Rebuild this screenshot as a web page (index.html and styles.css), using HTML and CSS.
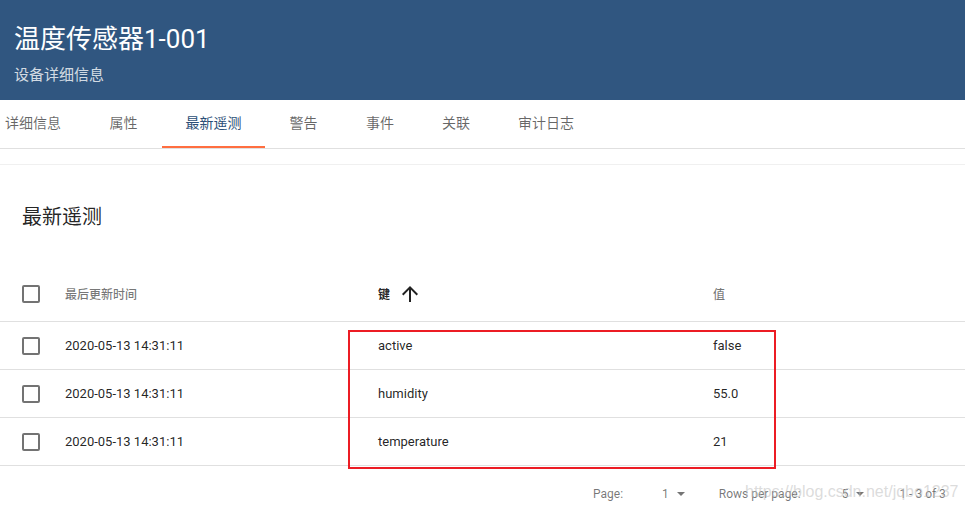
FILE: index.html
```html
<!DOCTYPE html>
<html lang="zh">
<head>
<meta charset="utf-8">
<link rel="stylesheet" href="styles.css">
</head>
<body>
<header class="header">
  <div class="title">温度传感器1-001</div>
  <div class="subtitle">设备详细信息</div>
</header>
<nav class="tabs">
  <div class="tab tab-wide">详细信息</div>
  <div class="tab tab-mid">属性</div>
  <div class="tab tab-wide active">最新遥测</div>
  <div class="tab tab-mid">警告</div>
  <div class="tab">事件</div>
  <div class="tab">关联</div>
  <div class="tab tab-wide">审计日志</div>
</nav>
<main class="card">
  <h2 class="card-title">最新遥测</h2>
  <table class="grid">
    <colgroup>
      <col class="c-check"><col class="c-time"><col class="c-key"><col>
    </colgroup>
    <thead>
      <tr>
        <th class="cell-check"><span class="checkbox"></span></th>
        <th>最后更新时间</th>
        <th class="sorted"><span class="sort">键<svg class="arrow" viewBox="0 0 24 24" width="24" height="24"><path d="M4 12l1.41 1.41L11 7.830V20h2V7.83l5.58 5.59L20 12l-8-8-8 8z"/></svg></span></th>
        <th>值</th>
      </tr>
    </thead>
    <tbody>
      <tr>
        <td class="cell-check"><span class="checkbox"></span></td>
        <td>2020-05-13 14:31:11</td>
        <td>active</td>
        <td>false</td>
      </tr>
      <tr>
        <td class="cell-check"><span class="checkbox"></span></td>
        <td>2020-05-13 14:31:11</td>
        <td>humidity</td>
        <td>55.0</td>
      </tr>
      <tr>
        <td class="cell-check"><span class="checkbox"></span></td>
        <td>2020-05-13 14:31:11</td>
        <td>temperature</td>
        <td>21</td>
      </tr>
    </tbody>
  </table>
  <div class="pager">
    <span class="p-label">Page:</span>
    <span class="p-select p-page">1<svg class="caret" viewBox="0 0 8 4" width="8" height="4"><path d="M0 0H8L4 4z"/></svg></span>
    <span class="p-label p-rows">Rows per page:</span>
    <span class="p-select p-size">5<svg class="caret" viewBox="0 0 8 4" width="8" height="4"><path d="M0 0H8L4 4z"/></svg></span>
    <span class="p-label p-range">1 - 3 of 3</span>
  </div>
  <div class="highlight"></div>
  <div class="watermark">https://blog.csdn.net/jqbo1237</div>
</main>
</body>
</html>
```
FILE: styles.css
```css
html, body {
  margin: 0;
  padding: 0;
  background: #fff;
  overflow: hidden;
}
body {
  font-family: Roboto, "Noto Sans CJK SC", sans-serif;
  color: rgba(0,0,0,0.87);
  width: 965px;
  height: 508px;
  position: relative;
}
.header {
  background: #305680;
  height: 100px;
  box-sizing: border-box;
  padding: 21px 0 0 14px;
  color: #fff;
}
.title {
  font-size: 26px;
  line-height: 36px;
}
.subtitle {
  margin-top: 6px;
  font-size: 15px;
  line-height: 24px;
  color: rgba(255,255,255,0.8);
}
.tabs {
  display: flex;
  height: 48px;
  border-bottom: 1px solid #e0e0e0;
  margin-left: -19px;
}
.tab {
  box-sizing: border-box;
  width: 76px;
  height: 48px;
  line-height: 46px;
  text-align: center;
  font-size: 14px;
  color: rgba(0,0,0,0.6);
  border-bottom: 2px solid transparent;
}
.tab-mid {
  width: 77px;
}
.tab-wide {
  width: 104px;
}
.tab.active {
  color: #2c4f77;
  border-bottom-color: #ff6e40;
  width: 103px;
}
.card {
  margin-top: 15px;
  border-top: 1px solid #f0f0f0;
  position: relative;
  height: 343px;
}
.card-title {
  margin: 0;
  padding: 40px 0 0 22px;
  height: 61px;
  font-size: 20px;
  line-height: 24px;
  font-weight: normal;
  color: rgba(0,0,0,0.87);
}
.grid {
  width: 100%;
  border-collapse: collapse;
  table-layout: fixed;
}
.c-check { width: 65px; }
.c-time { width: 313px; }
.c-key { width: 335px; }
.grid th, .grid td {
  padding: 0;
  text-align: left;
  border-bottom: 1px solid #e0e0e0;
  vertical-align: middle;
}
.grid th {
  height: 55px;
  font-size: 12px;
  font-weight: 500;
  color: rgba(0,0,0,0.54);
}
.grid th.sorted {
  color: rgba(0,0,0,0.87);
  font-weight: bold;
}
.sort {
  display: inline-flex;
  align-items: center;
}
.arrow {
  margin-left: 8px;
  fill: rgba(0,0,0,0.87);
}
.grid td {
  height: 47px;
  font-size: 13px;
  color: rgba(0,0,0,0.87);
}
.grid .cell-check {
  padding-left: 22px;
}
.checkbox {
  display: block;
  width: 14px;
  height: 14px;
  border: 2px solid #737373;
  border-radius: 2px;
}
.pager {
  display: flex;
  align-items: center;
  height: 56px;
  font-size: 12px;
  color: rgba(0,0,0,0.54);
  padding-left: 593px;
}
.p-select {
  display: inline-flex;
  align-items: center;
}
.caret {
  margin-left: 8px;
  fill: rgba(0,0,0,0.54);
}
.p-page { margin-left: 39px; }
.p-rows { margin-left: 34px; }
.p-size { margin-left: 41px; }
.p-range { margin-left: 35px; }
.highlight {
  position: absolute;
  left: 348px;
  top: 165px;
  width: 424px;
  height: 135px;
  border: 2px solid #ec1c24;
}
.watermark {
  position: absolute;
  left: 745px;
  top: 318px;
  font-family: "Liberation Sans", sans-serif;
  font-size: 16px;
  color: rgba(190,190,190,0.55);
  white-space: nowrap;
}
```
